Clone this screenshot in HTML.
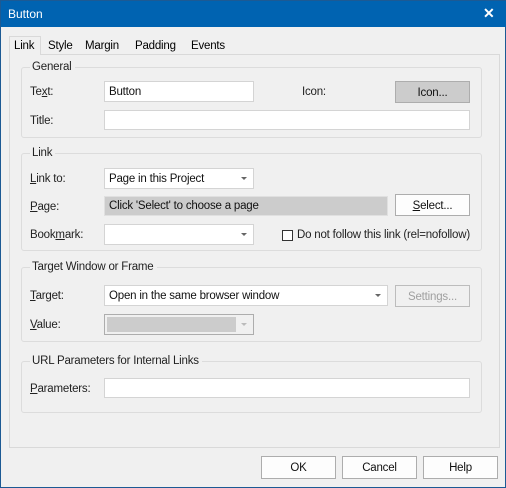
<!DOCTYPE html>
<html><head><meta charset="utf-8"><style>
*{box-sizing:border-box;margin:0;padding:0}
body{width:506px;height:488px;overflow:hidden;font-family:"Liberation Sans",sans-serif;font-size:11.5px;letter-spacing:-0.2px;color:#000;position:relative;background:#f0f0f0}
.win{position:absolute;left:0;top:0;width:506px;height:488px;border:1px solid #1c5a94;background:#f0f0f0}
.title{position:absolute;left:0;top:0;width:506px;height:26px;background:#0063b1;color:#fff;font-size:12px;letter-spacing:0}
.title span{position:absolute;left:7px;top:6px}
.title .x{left:482px;top:4px;font-size:14px;font-weight:bold}
.a{position:absolute}
.panel{position:absolute;left:8px;top:53px;width:491px;height:394px;border:1px solid #d9d9d9;background:#f0f0f0}
.tab{position:absolute;top:39px;height:15px;color:#000}
.tabsel{position:absolute;left:8px;top:35px;width:32px;height:19px;border:1px solid #d9d9d9;border-bottom:none;background:#f0f0f0;z-index:2}
.grp{position:absolute;left:20px;width:461px;border:1px solid #dcdcdc;border-radius:3px}
.gl{position:absolute;left:8px;top:-7px;background:#f0f0f0;padding:0 3px 0 2px;color:#222}
.lbl{position:absolute;left:29px;color:#222}
.in{position:absolute;background:#fff;border:1px solid #d4d4d4;padding:4px 0 0 4px;color:#111}
.btn{position:absolute;border:1px solid #adadad;background:#fdfdfd;text-align:center;padding-top:5px;color:#111}
.arr{position:absolute;right:6px;top:8px;width:0;height:0;border-left:3px solid transparent;border-right:3px solid transparent;border-top:3px solid #666}
u{text-decoration:underline}
</style></head><body>
<div class="win">
<div class="title"><span>Button</span><span class="x">✕</span></div>
<div class="panel"></div>
<div class="tabsel"></div>
<div class="tab" style="left:13px;z-index:3">Link</div>
<div class="tab" style="left:47px">Style</div>
<div class="tab" style="left:84px">Margin</div>
<div class="tab" style="left:134px">Padding</div>
<div class="tab" style="left:190px">Events</div>

<div class="grp" style="top:66px;height:71px"><div class="gl">General</div></div>
<div class="lbl" style="top:85px">Te<u>x</u>t:</div>
<div class="in" style="left:103px;top:80px;width:150px;height:21px">Button</div>
<div class="a" style="left:301px;top:85px;color:#222">Icon:</div>
<div class="btn" style="left:394px;top:80px;width:75px;height:22px;background:#cccccc">Icon...</div>
<div class="lbl" style="top:114px">Title:</div>
<div class="in" style="left:103px;top:109px;width:366px;height:20px"></div>

<div class="grp" style="top:152px;height:98px"><div class="gl">Link</div></div>
<div class="lbl" style="top:172px"><u>L</u>ink to:</div>
<div class="in" style="left:103px;top:167px;width:150px;height:21px">Page in this Project<div class="arr"></div></div>
<div class="lbl" style="top:200px"><u>P</u>age:</div>
<div class="in" style="left:103px;top:195px;width:284px;height:20px;background:#cccccc;border-color:#e0e0e0;padding-top:3px">Click 'Select' to choose a page</div>
<div class="btn" style="left:394px;top:193px;width:75px;height:22px"><u>S</u>elect...</div>
<div class="lbl" style="top:228px">Book<u>m</u>ark:</div>
<div class="in" style="left:103px;top:223px;width:150px;height:21px"><div class="arr"></div></div>
<div class="a" style="left:281px;top:229px;width:11px;height:11px;border:1px solid #333;background:#fff"></div>
<div class="a" style="left:296px;top:228px;color:#222">Do not follow this link (rel=nofollow)</div>

<div class="grp" style="top:266px;height:75px"><div class="gl">Target Window or Frame</div></div>
<div class="lbl" style="top:289px"><u>T</u>arget:</div>
<div class="in" style="left:103px;top:284px;width:284px;height:21px">Open in the same browser window<div class="arr"></div></div>
<div class="btn" style="left:394px;top:284px;width:75px;height:22px;color:#a0a0a0;background:#f0f0f0;border-color:#bcbcbc">Settings...</div>
<div class="lbl" style="top:318px"><u>V</u>alue:</div>
<div class="in" style="left:103px;top:313px;width:150px;height:21px;background:#f0f0f0;border-color:#adadad;padding:0"><div class="a" style="left:2px;top:2px;width:129px;height:15px;background:#cccccc"></div><div class="arr" style="border-top-color:#bbb"></div></div>

<div class="grp" style="top:360px;height:52px"><div class="gl">URL Parameters for Internal Links</div></div>
<div class="lbl" style="top:382px"><u>P</u>arameters:</div>
<div class="in" style="left:103px;top:377px;width:366px;height:20px"></div>

<div class="btn" style="left:260px;top:455px;width:75px;height:23px">OK</div>
<div class="btn" style="left:341px;top:455px;width:75px;height:23px">Cancel</div>
<div class="btn" style="left:422px;top:455px;width:75px;height:23px">Help</div>
</div>
</body></html>
